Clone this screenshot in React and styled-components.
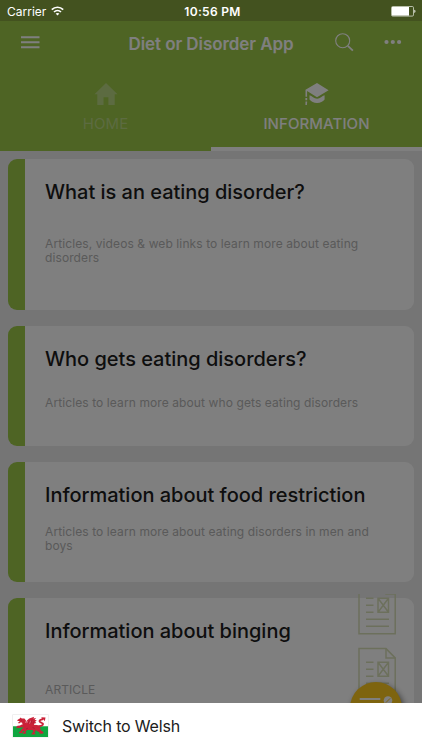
import styled, { createGlobalStyle } from 'styled-components';

const GlobalStyle = createGlobalStyle`
  * {
    box-sizing: border-box;
  }
  body {
    margin: 0;
    font-family: Inter, Roboto, sans-serif;
  }
`

const Screen = styled.div`
  position: relative;
  width: 422px;
  height: 750px;
  overflow: hidden;
  display: flex;
  flex-direction: column;
  background: #ebebeb;
`

const StatusBar = styled.div`
  height: 21px;
  flex: none;
  background: #86a43e;
`

const StatusContent = styled.div`
  position: absolute;
  inset: 0 0 auto 0;
  height: 21px;
  padding: 1px 6px 0 7px;
  display: grid;
  grid-template-columns: 1fr auto 1fr;
  align-items: center;
  color: #fff;
  font-size: 12px;
  z-index: 3;
`

const Carrier = styled.div`
  display: flex;
  align-items: center;
  gap: 5px;
  letter-spacing: 0;
`

const Clock = styled.div`
  padding-left: 2px;
  font-weight: 600;
  letter-spacing: 0.3px;
`

const Battery = styled.div`
  display: flex;
  justify-content: flex-end;
`

const Header = styled.div`
  height: 44px;
  flex: none;
  display: grid;
  grid-template-columns: 109px 204px 109px;
  align-items: center;
  background: #9cc848;
  color: #fff;
`

const HeaderTitle = styled.div`
  padding-top: 1px;
  text-align: center;
  font-size: 17px;
  font-weight: 600;
  letter-spacing: -0.07px;
  white-space: nowrap;
`

const HeaderSide = styled.div`
  display: flex;
  align-items: center;
  gap: ${props => props.$gap || 0}px;
  padding-left: ${props => props.$left}px;
  padding-bottom: 2px;
`

const Tabs = styled.div`
  height: 86px;
  flex: none;
  display: flex;
  background: #9cc848;
`

const Tab = styled.div`
  flex: 1;
  display: flex;
  flex-direction: column;
  align-items: center;
  padding-top: 16px;
  font-size: 15px;
  font-weight: ${props => props.$active ? 500 : 400};
  line-height: 18px;
  letter-spacing: 0.08px;
  color: ${props => props.$active ? '#fff' : '#b9d783'};
  border-bottom: 4px solid ${props => props.$active ? '#fff' : 'transparent'};
  svg {
    margin-bottom: 8px;
  }
`

const CardList = styled.div`
  display: flex;
  flex-direction: column;
  gap: 16px;
  padding: 8px 8.5px 8px 8px;
`

const CardItem = styled.div`
  position: relative;
  flex: none;
  height: ${props => props.$height}px;
  padding: 20px 20px 0 20px;
  border-left: 17px solid #9cc848;
  border-radius: 9px;
  background: #fff;
`

const CardTitle = styled.div`
  font-size: 20px;
  line-height: 26px;
  font-weight: 500;
  letter-spacing: -0.02px;
  color: #1c1c1c;
  white-space: nowrap;
`

const CardText = styled.div`
  margin-top: ${props => props.$top}px;
  font-size: 12px;
  line-height: 14px;
  letter-spacing: 0.1px;
  color: #b4b4b4;
  white-space: pre-line;
`

const ArticleFiles = styled.div`
  position: absolute;
  top: -4px;
  right: 17px;
  height: 120px;
  overflow: hidden;
`

const Fab = styled.div`
  position: absolute;
  top: 682px;
  left: 350px;
  width: 52px;
  height: 52px;
  border-radius: 50%;
  background: #fdc91e;
  box-shadow: 2px 3px 6px rgba(0, 0, 0, 0.55);
`

const Backdrop = styled.div`
  position: absolute;
  inset: 0;
  background: rgba(0, 0, 0, 0.5);
  z-index: 2;
`

const BottomSheet = styled.div`
  position: absolute;
  inset: 703px 0 0 0;
  display: flex;
  align-items: center;
  gap: 13px;
  padding: 0 0 2px 12px;
  background: #fff;
  color: #202020;
  font-size: 16px;
  letter-spacing: -0.18px;
  z-index: 3;
`

const WifiIcon = () => (
  <svg width="13" height="10" viewBox="0 0 13 10" fill="none" stroke="#fff" strokeWidth="1.7">
    <path d="M.8 3.7C4 .4 9 .4 12.2 3.7" />
    <path d="M3 6C5 4.1 8 4.1 10 6" />
    <path d="M4.6 7.6C5.7 6.7 7.3 6.7 8.4 7.6L6.5 9.5Z" fill="#fff" stroke="none" />
  </svg>
)

const BatteryIcon = () => (
  <svg width="25" height="11" viewBox="0 0 25 11">
    <rect x=".5" y=".5" width="22" height="9.6" rx="1.2" fill="none" stroke="#d5dacb" strokeWidth=".8" />
    <rect x="1" y="1" width="17" height="8.6" fill="#fff" />
    <path d="M23.4 3.7c1.4.3 1.4 2.9 0 3.2z" fill="#fff" />
  </svg>
)

const MenuIcon = () => (
  <svg width="19" height="13" viewBox="0 0 19 13" fill="#fff">
    <path d="M0 .2h18.5v2H0zM0 5.2h18.5v2H0zM0 10.2h18.5v2H0z" />
  </svg>
)

const SearchIcon = () => (
  <svg width="19" height="19" viewBox="0 0 19 19" fill="none" stroke="#fff">
    <circle cx="7.7" cy="7.7" r="7" strokeWidth="1.1" />
    <path d="M12.8 12.8L17.9 17.7" strokeWidth="1.8" />
  </svg>
)

const MoreIcon = () => (
  <svg width="18" height="6" viewBox="0 0 18 6" fill="#fff">
    <circle cx="2.5" cy="3" r="2.1" />
    <circle cx="8.8" cy="3" r="2.1" />
    <circle cx="15.1" cy="3" r="2.1" />
  </svg>
)

const HomeIcon = () => (
  <svg width="24" height="26" viewBox="0 0 24 26" fill="currentColor">
    <path d="M12 2L.5 13.2h2.8V24h6.2v-7.7h4.9V24h6.3V13.2h2.8z" />
  </svg>
)

const CapIcon = () => (
  <svg width="24" height="26" viewBox="0 0 24 26" fill="currentColor">
    <path d="M12 2L23.6 9.3 12 16.2 2.1 10.1v5.6H.5V8.8z" />
    <path d="M4.5 14.3c2.5.7 4.5 3.5 7.6 3.5 3.1 0 4.9-2.8 7.5-3.5v4.2c-2 2-4 3.5-7.5 3.5s-5.6-1.5-7.6-3.5z" />
    <path d="M.4 17h1.8v2.2H.4zM.5 20.5h1.7L1.9 24H.4z" />
  </svg>
)

const FileShape = ({ y }) => (
  <g transform={`translate(0 ${y})`}>
    <path d="M1 .7h27l9.2 9.3v39.8H1z" />
    <path d="M28 .7V10h9.2" />
    <path d="M8 14.3h7.5M8 21.3h7.5M8 28.3h7.5M8 35.3h23M8 42.3h23" />
    <path d="M20 14.3h10.5v14H20zM20 14.3l10.5 14M30.5 14.3L20 28.3" />
  </g>
)

const FilesIcon = () => (
  <svg width="39" height="120" viewBox="0 0 39 120" fill="none" stroke="#d9e0b9" strokeWidth="1.5">
    <FileShape y={-10} />
    <FileShape y={53.9} />
  </svg>
)

const EditIcon = () => (
  <svg width="52" height="52" viewBox="0 0 52 52">
    <path d="M9.7 17h20.6M9.7 24h18" stroke="#fff" strokeWidth="2" />
    <circle cx="38" cy="18.5" r="4.3" fill="#fff" />
    <path d="M35.8 20.7l4.4-4.4" stroke="#fdc91e" strokeWidth="1" />
  </svg>
)

const WelshFlag = () => (
  <svg width="37" height="24" viewBox="0 0 37 24">
    <rect x=".2" y=".2" width="36.6" height="23.4" rx=".6" fill="#ececec" />
    <rect x="1" y="1" width="35" height="11" fill="#fff" />
    <rect x="1" y="12.3" width="35" height="10.7" fill="#0fa63f" />
    <g fill="#cb2138">
      {/* head and neck */}
      <path d="M5.4 5.9l2.4-1.3.7-1.2 1.3 1 2.6.2 1.6 1.8-.4 2 1.3 2.2-2.6 1.3-1.7-1.4-.6-2.1-1.7.1-1.2 1.1-1.4-.8 1.9-1.1-.5-.7-1.6.1z" />
      {/* wing */}
      <path d="M13.5 11.2l1.1-4.4 2.6-2.4 5-1.6-.8 1.6 2.8-.3-1.6 1.7 2.2.6-1.8 1.4 1.4 1.3-2 .5-1.2 3.2-4.3 1.1z" />
      {/* body and legs */}
      <path d="M10.3 10.6l4.2-.8 6.3 1 4.3.3 3 2.1.6 3 2 1.2 1.1 1.5-1.7.8-3.2-.1.8-1.2-2.3-1.1-2.1-1.5.3 1.8-1.3.9 1.5 1.8-4.5.1.9-1.6 1.2-.8-.7-1.9-2.4-.2-3.2.2-1.6 1.6.8 1.9-3.6.3.6-1.5 1-.6-.3-1.3-1.8 1.1.6 1.4-4.2.2.9-1.4 1.2-.5.9-2.4 1.9-.8z" />
      <path d="M12.2 13.6l-3.8-.4-1.2 1-1.8-.5-.9.9-.2-1.7 1.2-1.2 2.5-.1 1.9-1 3.1.8z" />
    </g>
    {/* tail */}
    <path d="M25.2 12.5c2.3-.4 4.5-.2 5.6-1.8 1-1.8-3.1-1.9-3.3-3.5-.1-1.2 1.5-1.6 3.3-2.2" fill="none" stroke="#cb2138" strokeWidth="1.9" />
    <path d="M29.2 3.2l4.3.3-.7 3.8-1.3-1.7-1.5 1 .1-2.2z" fill="#cb2138" />
    <path d="M16.2 9.6l1.1-2.9M18.7 9.8l1.4-4.1M21 9.5l.8-2.2M14 15l2-.9M20.5 13.5l2.3.9M8.8 6l1.1.3" fill="none" stroke="#8f1730" strokeWidth=".5" />
    <path d="M15 9.2l.8-2.4M17.6 9.8l1-3" fill="none" stroke="#efb3bb" strokeWidth=".45" />
  </svg>
)

const cards = [
  {
    title: 'What is an eating disorder?',
    text: 'Articles, videos & web links to learn more about eating\ndisorders',
    height: 151,
    top: 32,
  },
  {
    title: 'Who gets eating disorders?',
    text: 'Articles to learn more about who gets eating disorders',
    height: 120,
    top: 24,
  },
  {
    title: 'Information about food restriction',
    text: 'Articles to learn more about eating disorders in men and\nboys',
    height: 120,
    top: 17,
  },
  {
    title: 'Information about binging',
    text: 'ARTICLE',
    height: 151,
    top: 39,
    files: true,
  },
]

const Card = ({ title, text, height, top, files }) => {
  return (
    <CardItem $height={height}>
      <CardTitle>{title}</CardTitle>
      <CardText $top={top}>{text}</CardText>
      {files && (
        <ArticleFiles>
          <FilesIcon />
        </ArticleFiles>
      )}
    </CardItem>
  )
}

const App = () => {
  return (
    <>
      <GlobalStyle />
      <Screen>
        <StatusBar />
        <Header>
          <HeaderSide $left={21}>
            <MenuIcon />
          </HeaderSide>
          <HeaderTitle>Diet or Disorder App</HeaderTitle>
          <HeaderSide $left={22} $gap={30}>
            <SearchIcon />
            <MoreIcon />
          </HeaderSide>
        </Header>
        <Tabs>
          <Tab>
            <HomeIcon />
            HOME
          </Tab>
          <Tab $active>
            <CapIcon />
            INFORMATION
          </Tab>
        </Tabs>
        <CardList>
          {cards.map(card => (
            <Card key={card.title} {...card} />
          ))}
        </CardList>
        <Fab>
          <EditIcon />
        </Fab>
        <Backdrop />
        <StatusContent>
          <Carrier>
            Carrier
            <WifiIcon />
          </Carrier>
          <Clock>10:56 PM</Clock>
          <Battery>
            <BatteryIcon />
          </Battery>
        </StatusContent>
        <BottomSheet>
          <WelshFlag />
          Switch to Welsh
        </BottomSheet>
      </Screen>
    </>
  )
}

export default App
